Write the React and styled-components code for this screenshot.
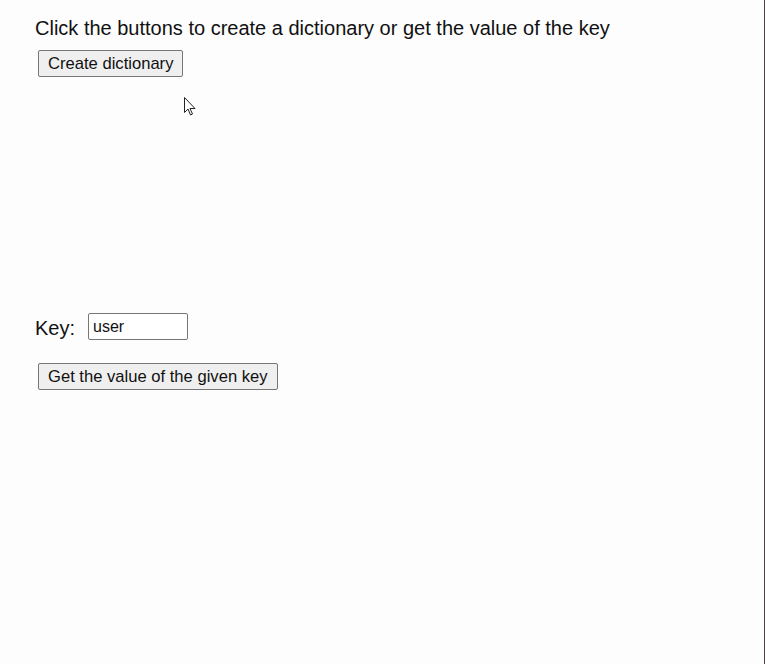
import React from "react";
import styled, { createGlobalStyle } from "styled-components";

const Global = createGlobalStyle`
  html, body {
    margin: 0;
    padding: 0;
    background: #fdfdfd;
  }
  body {
    font-family: "Liberation Sans", Arial, sans-serif;
  }
`;

const Page = styled.div`
  position: relative;
  box-sizing: border-box;
  width: 765px;
  height: 664px;
  padding: 16px 0 0 35px;
  border-right: 1px solid #4a4448;
  background: #fdfdfd;
  color: #111;
  overflow: hidden;
`;

const Title = styled.div`
  font-size: 20px;
  line-height: 24px;
`;

const Button = styled.button`
  font-family: "Liberation Sans", Arial, sans-serif;
  font-size: 16.6px;
  height: 27px;
  padding: 0 9px;
  margin: ${(p) => p.$top || 0}px 0 0 3px;
  background: #efefef;
  color: #111;
  border: 1px solid #767676;
  border-radius: 2px;
  display: block;
`;

const Output = styled.div`
  height: 240px;
`;

const KeyRow = styled.div`
  display: flex;
  align-items: center;
  gap: 13px;
  font-size: 20px;
`;

const KeyInput = styled.input`
  box-sizing: border-box;
  width: 100px;
  height: 27px;
  padding: 0 4px;
  margin-top: -4px;
  font-family: "Liberation Sans", Arial, sans-serif;
  font-size: 16px;
  color: #111;
  border: 1px solid #767676;
  border-radius: 2px;
  background: #fff;
`;

const Cursor = styled.svg`
  position: absolute;
  left: 184px;
  top: 97px;
`;

export default function App() {
  return (
    <>
      <Global />
      <Page>
        <Title>Click the buttons to create a dictionary or get the value of the key</Title>
        <Button $top={10}>Create dictionary</Button>
        <Output />
        <KeyRow>
          <span>Key:</span>
          <KeyInput defaultValue="user" />
        </KeyRow>
        <Button $top={23}>Get the value of the given key</Button>
        <Cursor width="14" height="20" viewBox="0 0 14 20">
          <path
            d="M0.5 0.5 L0.5 15.5 L4 12 L6.5 18 L8.5 17 L6 11.5 L11 11.5 Z"
            fill="#fff"
            stroke="#222"
            strokeWidth="1"
            strokeLinejoin="round"
          />
        </Cursor>
      </Page>
    </>
  );
}
